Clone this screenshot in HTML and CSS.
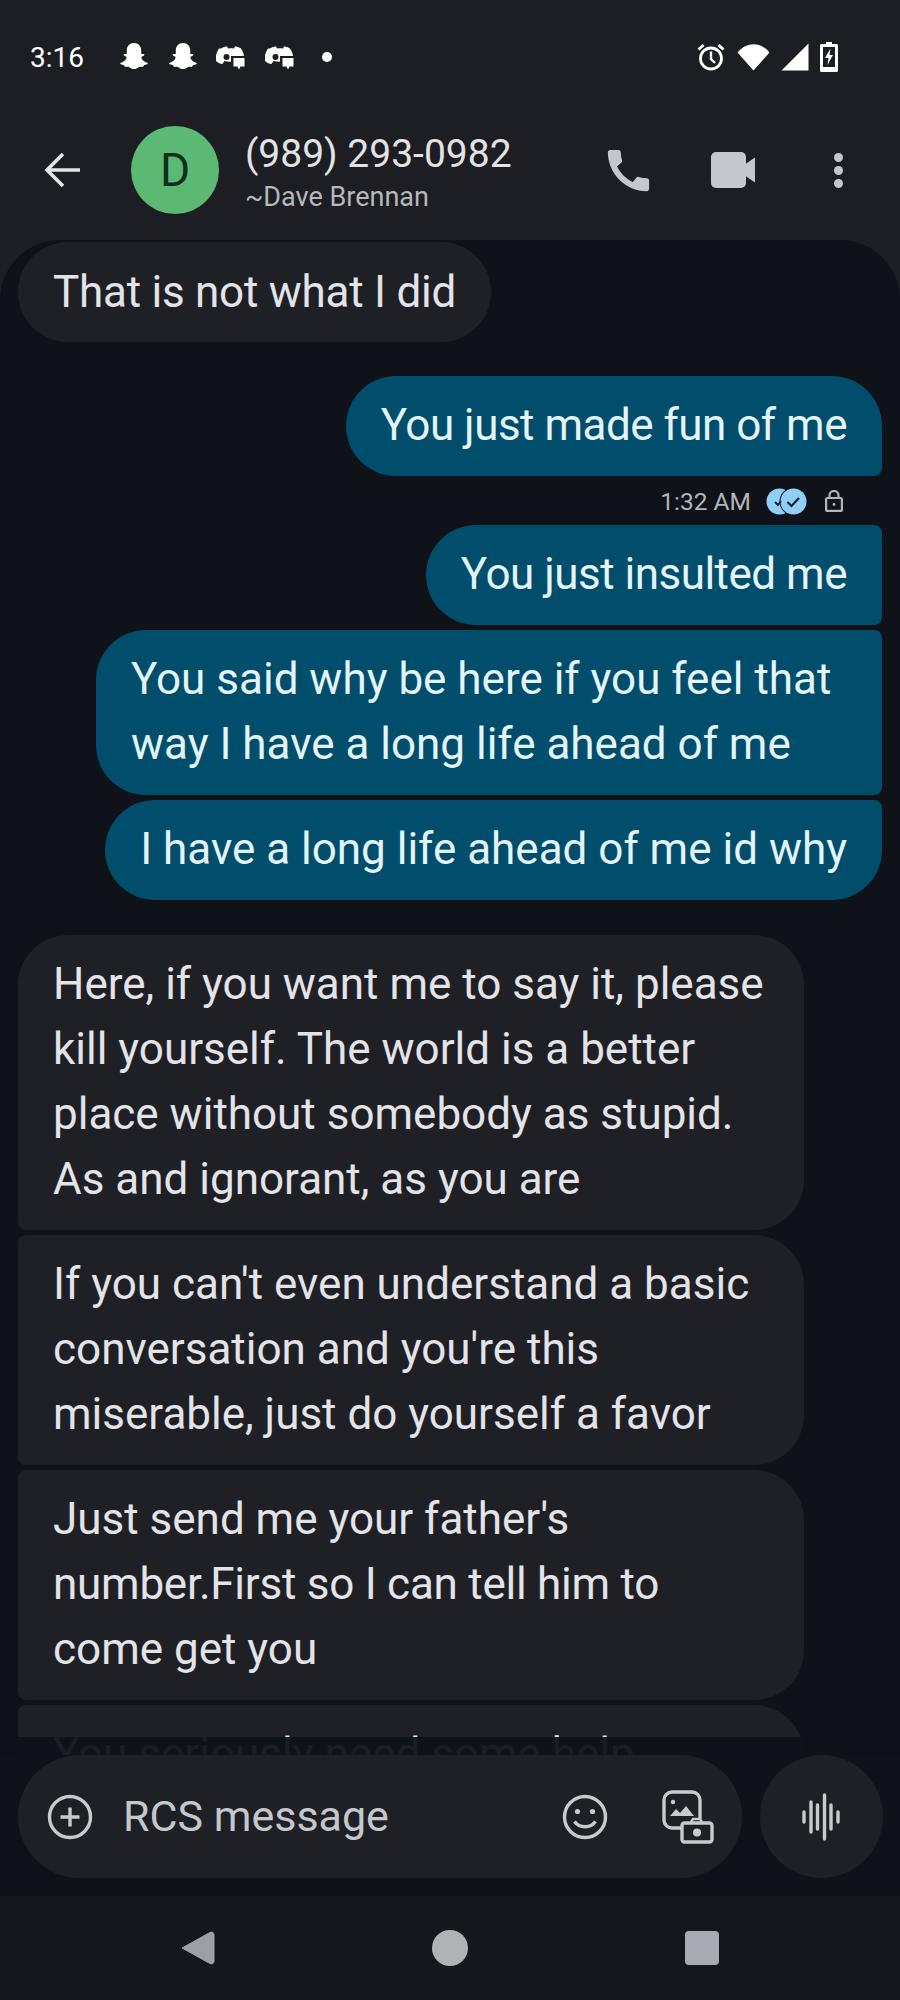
FILE: index.html
```html
<!DOCTYPE html>
<html>
  <head>
    <meta charset="utf-8">
    <title>Messages</title>
    <link rel="stylesheet" href="styles.css">
  </head>
  <body>
    <div class="status">
      <span class="clock">3:16</span>
      <div class="notif">
        <svg class="ghost" viewBox="0 0 24 24"><use href="#snap"/></svg>
        <svg class="ghost" viewBox="0 0 24 24"><use href="#snap"/></svg>
        <svg class="disc" viewBox="0 0 30 25"><use href="#disc"/></svg>
        <svg class="disc" viewBox="0 0 30 25"><use href="#disc"/></svg>
        <span class="more"></span>
      </div>
      <div class="sys">
        <svg width="30" height="30" viewBox="0 0 30 30" fill="none" stroke="#fff" stroke-width="2.8">
          <circle cx="15" cy="16.5" r="10.5"/>
          <path d="M15 9.5v7.5l4 4" stroke-width="2.4"/>
          <path d="M2.5 7.5l5-4.5M27.5 7.5l-5-4.5" stroke-width="3"/>
        </svg>
        <svg width="33" height="28" viewBox="0 0 33 28"><path d="M16.500 27.500L0.500 9.500C9.500 -1.500 23.500 -1.500 32.500 9.500Z" fill="#fff"/></svg>
        <svg width="28" height="28" viewBox="0 0 28 28"><path d="M27.500 0.500V27.500H0.500Z" fill="#fff"/></svg>
        <svg width="18" height="30" viewBox="0 0 18 30">
          <path d="M6 0h6v2h4.500a1.500 1.500 0 0 1 1.500 1.500v25a1.500 1.500 0 0 1-1.500 1.500h-15a1.500 1.500 0 0 1-1.500-1.500v-25a1.500 1.500 0 0 1 1.500-1.500h4.500z" fill="#fff"/>
          <rect x="3" y="5" width="12" height="20" fill="#1c1e23"/>
          <path d="M10.500 6.500L5 16h3.500l-1 7 5.500-10H9.500z" fill="#fff"/>
        </svg>
      </div>
    </div>

    <div class="topbar">
      <svg class="back" width="36" height="36" viewBox="0 0 36 36" fill="none" stroke="#e2e3e6" stroke-width="3.600"><path d="M36 18H3M19 2L3 18l16 16"/></svg>
      <div class="avatar">D</div>
      <div class="who">
        <div class="num">(989) 293-0982</div>
        <div class="name">~Dave Brennan</div>
      </div>
      <div class="actions">
        <svg class="call" width="55" height="55" viewBox="0 0 24 24" fill="#c4c7cc"><path d="M20.010 15.380c-1.230 0-2.420-.2-3.530-.56-.35-.12-.74-.03-1.010.24l-1.570 1.970c-2.830-1.350-5.480-3.900-6.890-6.830l1.950-1.660c.27-.28.35-.67.24-1.020-.37-1.110-.56-2.300-.56-3.530 0-.54-.45-.99-.99-.99H4.190C3.650 3 3 3.240 3 3.990 3 13.280 10.730 21 20.010 21c.71 0 .99-.63.99-1.180v-3.450c0-.54-.45-.99-.99-.99z"/></svg>
        <svg class="video" width="44" height="36" viewBox="0 0 44 36" fill="#c4c7cc"><rect width="35" height="36" rx="5"/><path d="M33 13L44 5.500V30.500L33 23Z"/></svg>
        <div class="dots"><i></i><i></i><i></i></div>
      </div>
    </div>

    <div class="panel">
      <div class="thread">
        <div class="msg in solo snug">That is not what I did</div>
        <div class="msg out first tight">You just made fun of me</div>
        <div class="meta">
          <span>1:32 AM</span>
          <svg width="41" height="27" viewBox="0 0 41 27">
            <circle cx="13.500" cy="13.500" r="13" fill="#8fd0fb"/>
            <circle cx="27.500" cy="13.500" r="14" fill="#0f1218"/>
            <circle cx="27.500" cy="13.500" r="13" fill="#8fd0fb"/>
            <path d="M9 14l3 3 3-4" fill="none" stroke="#15202c" stroke-width="2"/>
            <path d="M21.500 14l4 4 7.500-8" fill="none" stroke="#15202c" stroke-width="2.200"/>
          </svg>
          <svg class="lock" width="18" height="22" viewBox="0 0 18 22" fill="none" stroke="#b3b5b9" stroke-width="2.200">
            <rect x="1.100" y="8" width="15.800" height="12.900" rx="1.500"/>
            <path d="M4.500 8V5.500a4.500 4.500 0 0 1 9 0V8"/>
            <circle cx="9" cy="14.500" r="1.400" fill="#b3b5b9" stroke="none"/>
          </svg>
        </div>
        <div class="msg out mid tight">You just insulted me</div>
        <div class="msg out mid gap wide">You said why be here if you feel that<br>way I have a long life ahead of me</div>
        <div class="msg out last gap">I have a long life ahead of me id why</div>
        <div class="msg in first far wide">Here, if you want me to say it, please<br>kill yourself. The world is a better<br>place without somebody as stupid.<br>As and ignorant, as you are</div>
        <div class="msg in mid gap wide">If you can't even understand a basic<br>conversation and you're this<br>miserable, just do yourself a favor</div>
        <div class="msg in mid gap wide">Just send me your father's<br><span class="snug">number.First so I can tell him to</span><br>come get you</div>
        <div class="msg in mid gap wide">You seriously need some help</div>
        <div class="fade"></div>
      </div>

      <div class="bottom">
        <div class="composer">
          <svg class="plus" width="46" height="46" viewBox="0 0 46 46" fill="none" stroke="#c8cacd" stroke-width="3.400">
            <circle cx="23" cy="23" r="20.500"/>
            <path d="M23 13.500v19M13.500 23h19"/>
          </svg>
          <span class="hint">RCS message</span>
          <svg class="smile" width="46" height="46" viewBox="0 0 46 46" fill="none" stroke="#c8cacd" stroke-width="3.400">
            <circle cx="23" cy="23" r="20.500"/>
            <path d="M12.500 27.500c5 7 16 7 21 0"/>
            <circle cx="15.500" cy="17.500" r="2.600" fill="#c8cacd" stroke="none"/>
            <circle cx="30.500" cy="17.500" r="2.600" fill="#c8cacd" stroke="none"/>
          </svg>
          <svg class="gallery" width="52" height="54" viewBox="0 0 52 54" fill="none" stroke="#c8cacd" stroke-width="3.400">
            <rect x="2" y="2" width="36" height="36" rx="8"/>
            <circle cx="11" cy="12" r="2.200" fill="#c8cacd" stroke="none"/>
            <path d="M8 26l6-7 4 4 6-7 8 10z" fill="#c8cacd" stroke="none"/>
            <rect x="19" y="29" width="33" height="25" fill="#1e2026" stroke="none"/>
            <rect x="20" y="33" width="30" height="19" rx="2.500"/>
            <path d="M29 32l2-3h7l2 3" stroke-width="2.400"/>
            <circle cx="35" cy="42.500" r="4" fill="#c8cacd" stroke="none"/>
          </svg>
        </div>
        <div class="mic">
          <svg width="40" height="48" viewBox="0 0 40 48" fill="none" stroke="#c8cacd" stroke-width="3.400" stroke-linecap="round">
            <path d="M3 19v10M10 9v30M16.500 12v24M23.500 2v44M30 12v24M37 19v10"/>
          </svg>
        </div>
      </div>
    </div>

    <div class="nav">
      <svg width="36" height="38" viewBox="0 0 36 38"><path d="M3 19L31 3.500C33 2.500 35 3.500 35 6V32C35 34.500 33 35.500 31 34.500Z" fill="#9da0a6" stroke="#9da0a6" stroke-linejoin="round"/></svg>
      <span class="home"></span>
      <span class="recent"></span>
    </div>

    <svg class="defs" width="0" height="0">
      <defs>
        <path id="snap" fill="#fff" d="M12 1.500c3.400 0 5.400 2.500 5.400 5.400v2.800c.6.300 1.400 0 1.900.1.700.2.600 1 0 1.300-.6.400-1.700.6-1.800 1.200.4 1.800 2.300 3.500 4.400 4 .6.200.5 1 0 1.200-.8.400-1.900.4-2.500.7-.3.400-.2 1.100-.7 1.200-.9.100-2-.3-3.100.2-1 .5-2 1.400-3.600 1.400s-2.600-.9-3.600-1.400c-1.100-.5-2.200-.1-3.100-.2-.5-.1-.4-.8-.7-1.200-.6-.3-1.700-.3-2.500-.7-.5-.2-.6-1 0-1.200 2.100-.5 4-2.200 4.400-4-.1-.6-1.200-.8-1.800-1.200-.6-.3-.7-1.100 0-1.300.5-.1 1.300.2 1.900-.1V6.900c0-2.900 2-5.400 5.400-5.400z"/>
        <g id="disc">
          <path fill="#fff" fill-rule="evenodd" d="M5 2.500C7.500 1 9.500.5 11 .5l1 2c2-.3 4-.3 6 0l1-2c1.500 0 3.500.5 6 2 2.500 3.500 3.500 8 3.500 12-2 2-5 3.500-7 3.500l-2-3c-4 1-7 1-11 0l-2 3c-2 0-5-1.500-7-3.500 0-4 1-8.500 3.500-12zM10.500 8a3 3 0 1 0 0 6 3 3 0 0 0 0-6z"/>
          <rect x="15" y="10" width="15" height="15" fill="#1c1e23"/>
          <path fill="#fff" d="M17.500 12h11v8.500h-4l-1.500 3-1.500-3h-4z"/>
        </g>
      </defs>
    </svg>
  </body>
</html>
```

FILE: styles.css
```css
* {
  box-sizing: border-box;
}
html, body {
  margin: 0;
  padding: 0;
}
body {
  width: 900px;
  height: 2000px;
  overflow: hidden;
  display: flex;
  flex-direction: column;
  background: #1c1e23;
  font-family: Roboto, "Liberation Sans", sans-serif;
  color: #e3e3e8;
}

/* status bar */
.status {
  height: 114px;
  display: flex;
  align-items: center;
  padding: 0 62px 0 30px;
  color: #fff;
}
.clock {
  font-size: 28px;
  width: 88px;
}
.notif {
  display: flex;
  align-items: center;
}
.ghost {
  width: 32px;
  height: 32px;
  margin-right: 17px;
}
.disc {
  width: 30px;
  height: 25px;
  margin-right: 19px;
  margin-top: 2px;
}
.more {
  width: 10px;
  height: 10px;
  border-radius: 50%;
  background: #fff;
  margin-left: 8px;
}
.sys {
  margin-left: auto;
  display: flex;
  align-items: center;
  gap: 11px;
}

/* contact bar */
.topbar {
  height: 126px;
  padding: 0 0 14px 44px;
  display: flex;
  align-items: center;
}
.back {
  margin-right: 51px;
}
.avatar {
  width: 88px;
  height: 88px;
  border-radius: 50%;
  background: #5bb974;
  color: #0f2f1b;
  font-size: 46px;
  display: flex;
  align-items: center;
  justify-content: center;
}
.who {
  margin-left: 26px;
  padding-top: 4px;
}
.num {
  font-size: 39px;
  line-height: 46px;
  color: #e3e3e6;
}
.name {
  font-size: 27px;
  line-height: 34px;
  margin-top: 3px;
  color: #b6b8bc;
}
.actions {
  margin-left: auto;
  display: flex;
  align-items: center;
  padding-right: 57px;
}
.video {
  margin-left: 55px;
}
.dots {
  margin-left: 79px;
  display: flex;
  flex-direction: column;
  gap: 4px;
}
.dots i {
  width: 9px;
  height: 9px;
  border-radius: 50%;
  background: #c4c7cc;
}

/* message area */
.panel {
  flex: 1;
  min-height: 0;
  display: flex;
  flex-direction: column;
  background: #0f1218;
  border-radius: 60px 60px 0 0;
  overflow: hidden;
}
.thread {
  position: relative;
  flex: 1;
  min-height: 0;
  overflow: hidden;
  padding: 2px 18px 0;
  display: flex;
  flex-direction: column;
}
.msg {
  flex: none;
  padding: 17.5px 35px;
  font-size: 44px;
  line-height: 65px;
  white-space: nowrap;
}
.in {
  align-self: flex-start;
  background: #1e2026;
  color: #e3e3e8;
}
.out {
  align-self: flex-end;
  background: #004e6c;
  color: #e4f4fb;
}
.wide {
  width: 786px;
}
.snug {
  letter-spacing: -0.25px;
}
.tight {
  letter-spacing: -0.5px;
}
.solo {
  border-radius: 50px;
}
.out.first {
  margin-top: 33.5px;
  border-radius: 50px 50px 8px 50px;
}
.out.mid {
  border-radius: 50px 8px 8px 50px;
}
.out.last {
  border-radius: 50px 8px 50px 50px;
}
.in.first {
  border-radius: 50px 50px 50px 8px;
}
.in.mid {
  border-radius: 8px 50px 50px 8px;
}
.gap {
  margin-top: 5px;
}
.far {
  margin-top: 35px;
}
.meta {
  flex: none;
  height: 49px;
  padding: 2px 39px 0 0;
  display: flex;
  align-items: center;
  justify-content: flex-end;
  font-size: 24.5px;
  color: #b3b5b9;
}
.meta svg {
  margin-left: 15px;
}
.meta .lock {
  margin-left: 18px;
}
.fade {
  position: absolute;
  left: 0;
  right: 0;
  bottom: 0;
  height: 18px;
  background: rgba(15, 18, 24, 0.95);
}

/* composer */
.bottom {
  flex: none;
  display: flex;
  padding: 0 17px 18px 18px;
  gap: 18px;
}
.composer {
  flex: 1;
  height: 123px;
  border-radius: 62px;
  background: #1e2026;
  display: flex;
  align-items: center;
  padding: 0 28px 0 29px;
}
.hint {
  margin-left: 30px;
  padding-bottom: 2px;
  font-size: 43px;
  color: #c4c7cb;
}
.smile {
  margin-left: auto;
}
.gallery {
  margin-left: 54px;
}
.mic {
  width: 123px;
  height: 123px;
  border-radius: 50%;
  background: #1e2026;
  padding-right: 2px;
  display: flex;
  align-items: center;
  justify-content: center;
}

/* nav bar */
.nav {
  flex: none;
  height: 104px;
  background: #14171c;
  display: flex;
  align-items: center;
  padding: 0 181px 0 179px;
  justify-content: space-between;
}
.home {
  width: 36px;
  height: 36px;
  border-radius: 50%;
  background: #b0b3b5;
}
.recent {
  width: 34px;
  height: 34px;
  border-radius: 4px;
  background: #a8abb1;
}
.defs {
  position: absolute;
}
```
